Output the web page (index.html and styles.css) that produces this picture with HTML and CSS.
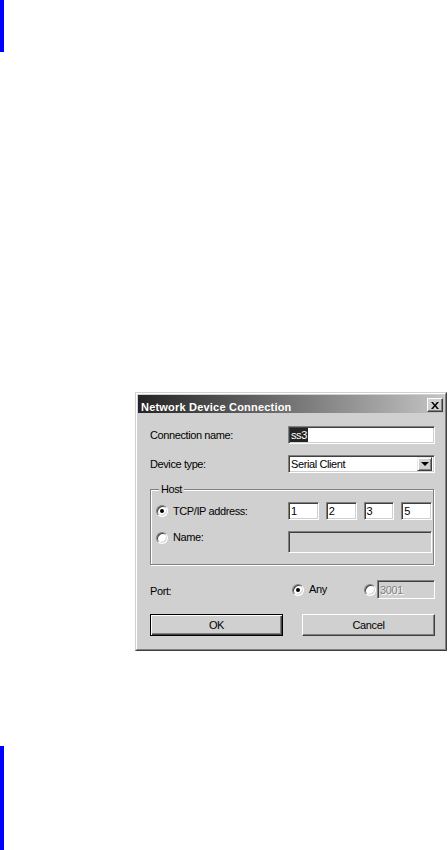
FILE: index.html
```html
<!DOCTYPE html>
<html lang="en">
<head>
    <meta charset="UTF-8">
    <meta name="viewport" content="width=device-width, initial-scale=1.0">
    <title>Network Device Connection</title>
    <link rel="stylesheet" href="styles.css">
</head>
<body>
    <div class="bar bar-top"></div>

    <div class="dialog">
        <div class="frame">
            <div class="titlebar">
                <span class="title">Network Device Connection</span>
                <span class="close" title="Close">
                    <svg width="8" height="7" viewBox="0 0 8 7">
                        <path d="M0 0h2l2 2.5L6 0h2L5 3.5 8 7H6L4 4.5 2 7H0l3-3.5z" fill="#000"/>
                    </svg>
                </span>
            </div>

            <div class="dlg-body">
                <div class="row">
                    <span class="label">Connection name:</span>
                    <div class="edit field"><span class="selected">ss3</span></div>
                </div>

                <div class="row row-combo">
                    <span class="label">Device type:</span>
                    <div class="edit field combo">
                        <span class="combo-text">Serial Client</span>
                        <span class="combo-btn"><span class="arrow"></span></span>
                    </div>
                </div>

                <div class="group">
                    <span class="legend">Host</span>
                    <div class="group-row">
                        <span class="choice"><span class="radio on"></span>TCP/IP address:</span>
                        <div class="ip">
                            <div class="edit">1</div>
                            <div class="edit">2</div>
                            <div class="edit">3</div>
                            <div class="edit">5</div>
                        </div>
                    </div>
                    <div class="group-row row-name">
                        <span class="choice"><span class="radio"></span>Name:</span>
                        <div class="edit disabled name-field"></div>
                    </div>
                </div>

                <div class="row row-port">
                    <span class="label">Port:</span>
                    <span class="choice any"><span class="radio on"></span>Any</span>
                    <span class="radio"></span>
                    <div class="edit disabled port-field">3001</div>
                </div>

                <div class="buttons">
                    <button class="btn default">OK</button>
                    <button class="btn">Cancel</button>
                </div>
            </div>
        </div>
    </div>

    <div class="bar bar-bottom"></div>
</body>
</html>
```

FILE: styles.css
```css
* {
    box-sizing: border-box;
}

body {
    margin: 0;
    background: #ffffff;
    font-family: 'Liberation Sans', Arial, sans-serif;
    font-size: 11px;
    letter-spacing: -0.4px;
    color: #000;
}

/* page margin markers */
.bar {
    width: 4px;
    background: #0000ff;
}

.bar-top {
    height: 52px;
}

.bar-bottom {
    height: 104px;
    margin-top: 95px;
}

/* window frame */
.dialog {
    width: 312px;
    margin: 340px 0 0 135px;
    border: 1px solid;
    border-color: #d0d0d0 #404040 #404040 #d0d0d0;
    background: #d0d0d0;
}

.frame {
    border: 1px solid;
    border-color: #ffffff #808080 #808080 #ffffff;
    padding: 1px;
}

.titlebar {
    height: 18px;
    display: flex;
    align-items: flex-start;
    justify-content: space-between;
    background: linear-gradient(to right, #242424, #c4c4c4);
}

.title {
    padding: 4px 0 0 3px;
    line-height: 16px;
    font-weight: bold;
    letter-spacing: 0.2px;
    color: #ffffff;
}

.close {
    width: 16px;
    height: 14px;
    margin: 3px 1px 0 0;
    display: flex;
    align-items: center;
    justify-content: center;
    background: #d0d0d0;
    border: 1px solid;
    border-color: #ffffff #404040 #404040 #ffffff;
    box-shadow: inset -1px -1px #808080;
}

.close svg {
    display: block;
}

/* body of the dialog */
.dlg-body {
    padding: 13px 9px 12px 12px;
}

.row {
    display: flex;
    align-items: center;
}

.row-combo {
    margin-top: 11px;
}

.label {
    width: 138px;
    flex-shrink: 0;
}

/* sunken edit box */
.edit {
    height: 18px;
    display: flex;
    align-items: center;
    padding: 0 2px;
    background: #ffffff;
    border: 1px solid;
    border-color: #808080 #ffffff #ffffff #808080;
    box-shadow: inset 1px 1px #404040, inset -1px -1px #d0d0d0;
    white-space: nowrap;
}

.edit.disabled {
    background: #d0d0d0;
}

.field {
    width: 147px;
    padding-left: 1px;
}

.selected {
    line-height: 14px;
    padding: 0 1px;
    background: #242424;
    color: #ffffff;
}

.combo {
    padding-right: 2px;
    justify-content: space-between;
}

.combo-text {
    padding-left: 1px;
}

.combo-btn {
    width: 15px;
    height: 14px;
    display: flex;
    align-items: center;
    justify-content: center;
    background: #d0d0d0;
    border: 1px solid;
    border-color: #e8e8e8 #404040 #404040 #e8e8e8;
    box-shadow: inset 1px 1px #ffffff, inset -1px -1px #808080;
}

.arrow {
    width: 0;
    height: 0;
    border-left: 4px solid transparent;
    border-right: 4px solid transparent;
    border-top: 4px solid #000;
}

/* etched group box */
.group {
    margin: 16px 1px 0 0;
    padding: 0 1px 11px 5px;
    border: 1px solid #808080;
    box-shadow: inset 1px 1px #ffffff, 1px 1px #ffffff;
}

.legend {
    display: block;
    width: max-content;
    margin: -7px 0 0 3px;
    padding: 0 2px;
    line-height: 13px;
    background: #d0d0d0;
}

.group-row {
    display: flex;
    align-items: center;
    margin-top: 6px;
}

.row-name {
    margin-top: 11px;
    align-items: flex-start;
}

.choice {
    display: flex;
    align-items: center;
    gap: 5px;
    line-height: 13px;
}

.group-row .choice {
    width: 132px;
    flex-shrink: 0;
}

.ip {
    width: 144px;
    display: grid;
    grid-template-columns: repeat(4, 1fr);
    column-gap: 7px;
}

.name-field {
    width: 144px;
    height: 22px;
}

/* radio buttons */
.radio {
    width: 12px;
    height: 12px;
    flex-shrink: 0;
    display: flex;
    align-items: center;
    justify-content: center;
    border-radius: 50%;
    background: #ffffff;
    border: 1px solid;
    border-color: #808080 #ffffff #ffffff #808080;
    box-shadow: inset 1px 1px #404040, inset -1px -1px #d0d0d0;
}

.radio.on::after {
    content: "";
    width: 4px;
    height: 4px;
    border-radius: 50%;
    background: #000;
}

.row-port {
    margin-top: 15px;
}

.row-port .label {
    padding-top: 3px;
}

.any {
    width: 76px;
    padding-left: 4px;
}

.port-field {
    width: 58px;
    height: 19px;
    margin-left: 1px;
    color: #808080;
    text-shadow: 1px 1px #ffffff;
}

/* push buttons */
.buttons {
    margin-top: 15px;
    display: flex;
    justify-content: space-between;
}

.btn {
    width: 133px;
    height: 22px;
    padding: 0;
    font: inherit;
    letter-spacing: inherit;
    color: #000;
    background: #d0d0d0;
    border: 1px solid;
    border-color: #ffffff #404040 #404040 #ffffff;
    box-shadow: inset -1px -1px #808080;
    border-radius: 0;
}

.btn.default {
    border-color: #000;
    box-shadow: inset 1px 1px #ffffff, inset -2px -2px #404040, inset -1px -1px #808080;
    box-shadow: inset 1px 1px #ffffff, inset -1px -1px #404040, inset -2px -2px #808080;
}
```
